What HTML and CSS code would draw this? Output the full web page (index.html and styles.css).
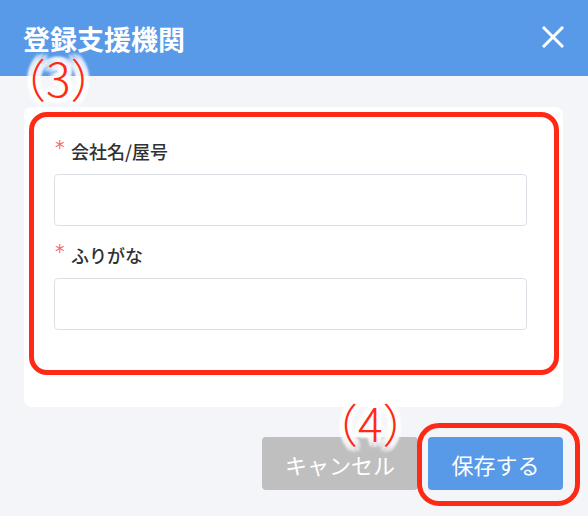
FILE: index.html
```html
<!DOCTYPE html>
<html lang="ja">
<head>
<meta charset="utf-8">
<link rel="stylesheet" href="styles.css">
</head>
<body>
<div class="dialog">
  <header class="dlg-head">
    <h1 class="dlg-title">登録支援機関</h1>
    <button class="close" aria-label="close">
      <svg width="22" height="22" viewBox="0 0 22 22"><path d="M2 2 L20 20 M20 2 L2 20" stroke="#fff" stroke-width="3" stroke-linecap="square" fill="none"/></svg>
    </button>
  </header>
  <main class="dlg-body">
    <section class="card">
      <div class="field">
        <label class="label"><span class="req">*</span>会社名/屋号</label>
        <div class="input"></div>
      </div>
      <div class="field">
        <label class="label"><span class="req">*</span>ふりがな</label>
        <div class="input"></div>
      </div>
    </section>
    <div class="footer">
      <button class="btn cancel">キャンセル</button>
      <button class="btn save">保存する</button>
    </div>
  </main>
  <div class="mark mark-form"></div>
  <div class="mark mark-save"></div>
  <div class="note note-3">（3）</div>
  <div class="note note-4">（4）</div>
</div>
</body>
</html>
```

FILE: styles.css
```css
* { box-sizing: border-box; }
html, body { margin: 0; padding: 0; }
body {
  font-family: "Noto Sans CJK JP", "Noto Sans", sans-serif;
  background: #f4f5f9;
}
.dialog {
  position: relative;
  width: 588px;
  height: 516px;
  background: #f4f5f9;
  overflow: hidden;
}
.dlg-head {
  height: 76px;
  background: #5899e8;
  display: flex;
  align-items: center;
  justify-content: space-between;
  padding: 0 24px 0 23px;
}
.dlg-title {
  margin: 0;
  color: #fff;
  font-size: 27px;
  font-weight: 700;
  line-height: 1;
}
.close {
  border: 0;
  background: none;
  padding: 0;
  width: 22px;
  height: 22px;
  display: flex;
  margin-top: -2px;
}
.dlg-body {
  padding: 31px 25px 0 24px;
}
.card {
  background: #fff;
  border-radius: 8px;
  padding: 32px 36px 77px 30px;
}
.field + .field { margin-top: 17px; }
.label {
  display: flex;
  align-items: flex-start;
  height: 24px;
  line-height: 24px;
  font-size: 18px;
  font-weight: 500;
  color: #303133;
}
.req {
  color: #f56c6c;
  font-family: "DejaVu Sans", sans-serif;
  font-size: 19px;
  line-height: 19px;
  width: 16px;
  margin-top: -1px;
  margin-left: 1px;
}
.input {
  margin-top: 11px;
  height: 52px;
  border: 1px solid #dcdfe6;
  border-radius: 4px;
  background: #fff;
}
.footer {
  margin-top: 30px;
  display: flex;
  justify-content: flex-end;
  gap: 10px;
}
.btn {
  height: 53px;
  border: 0;
  border-radius: 4px;
  padding: 0 20px;
  color: #fff;
  font-family: "Noto Sans CJK JP", "Noto Sans", sans-serif;
  font-size: 22px;
  line-height: 1;
}
.cancel { background: #bfbfbf; width: 156px; }
.save { background: #5899e8; width: 135px; }
.mark {
  position: absolute;
  border: 5px solid #ff2a16;
}
.mark-form {
  left: 29px; top: 112px; width: 530px; height: 263px;
  border-radius: 18px;
}
.mark-save {
  left: 417px; top: 423px; width: 163px; height: 83px;
  border-radius: 22px;
}
.note {
  position: absolute;
  color: #ff2a16;
  font-family: "Noto Sans CJK JP", "Noto Sans", sans-serif;
  font-size: 46px;
  font-weight: 300;
  line-height: 1;
  white-space: nowrap;
  text-shadow:
    0 0 3px #fff, 0 0 3px #fff,
    5px 0 3px #fff, -5px 0 3px #fff, 0 5px 3px #fff, 0 -5px 3px #fff,
    4px 4px 3px #fff, -4px 4px 3px #fff, 4px -4px 3px #fff, -4px -4px 3px #fff;
}
.note-3 { left: 0px; top: 54px; }
.note-4 { left: 312px; top: 399px; }
```
